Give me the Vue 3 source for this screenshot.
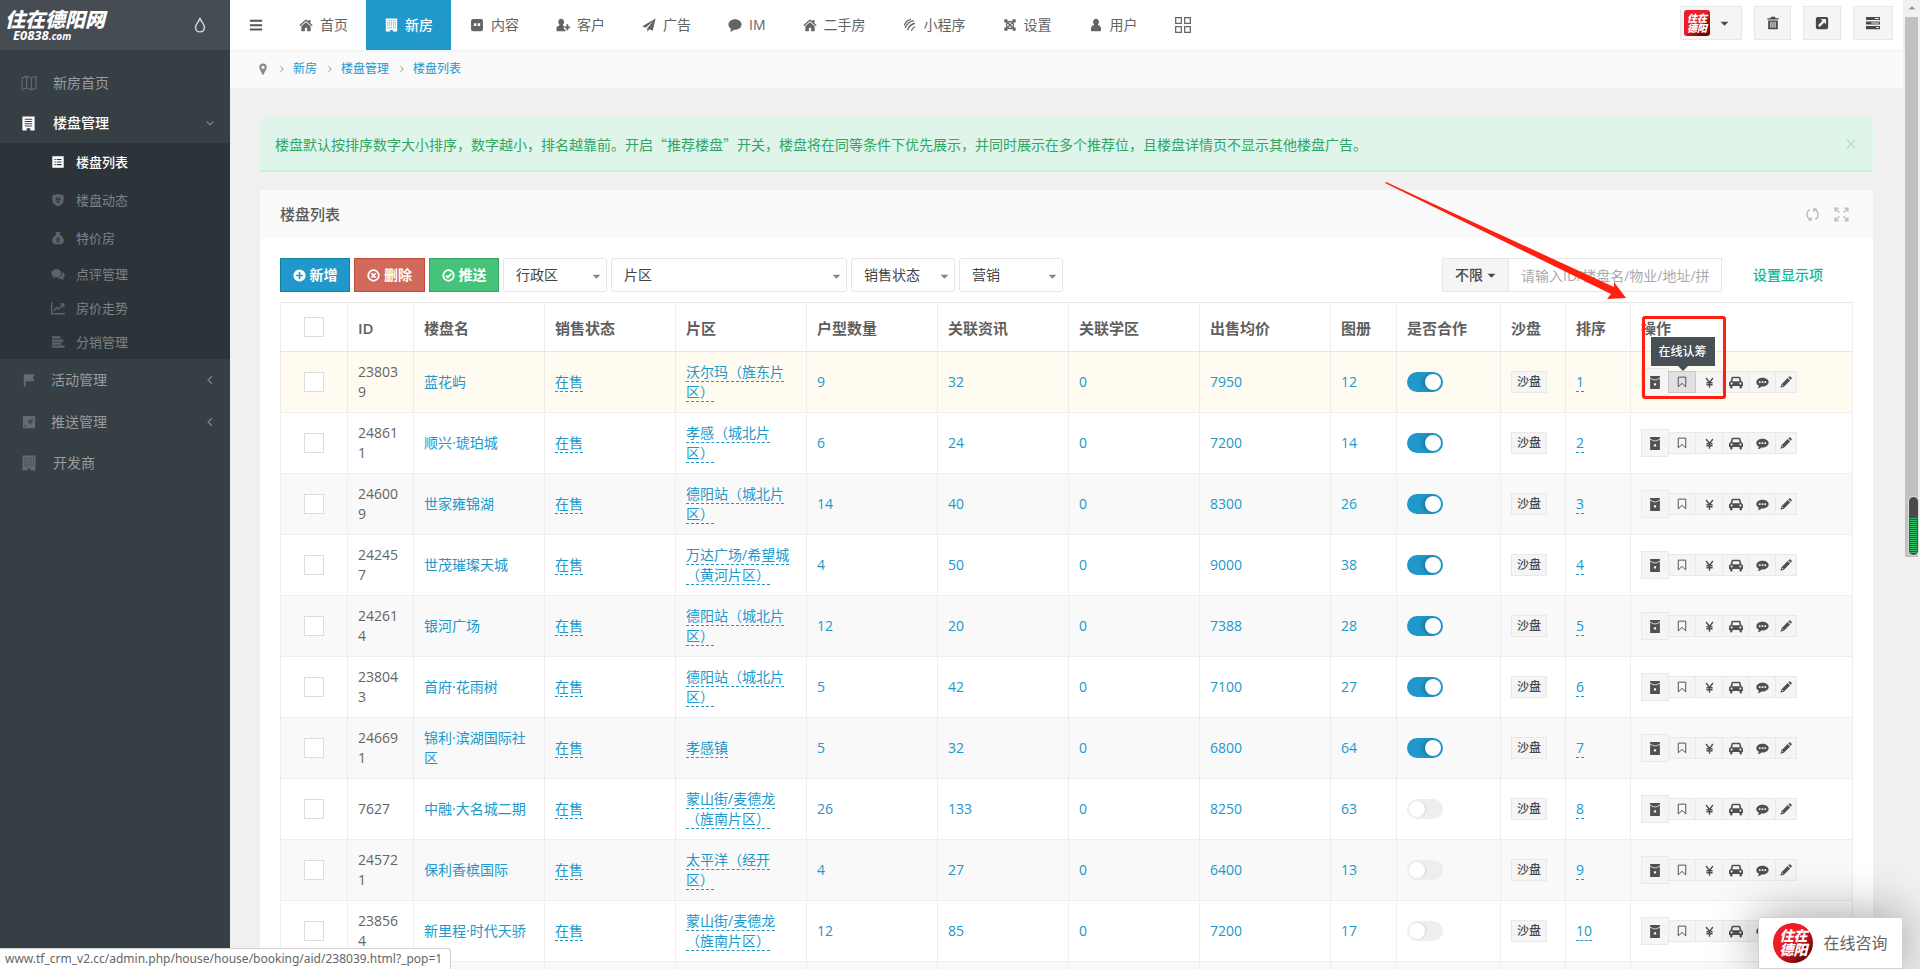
<script setup>
import { h, ref } from 'vue'

const dots = (x0, y0, cols, rows, step, size) => {
  let d = ''
  for (let r = 0; r < rows; r++)
    for (let c = 0; c < cols; c++) d += `M${x0 + c * step} ${y0 + r * step}h${size}v${size}h-${size}z`
  return d
}

const glyphs = {
  menu: { f: 'M1 2h14v2.4H1zM1 7h14v2.4H1zM1 12h14v2.4H1z' },
  home: { f: 'M8 1.4 0.4 8.2l1 1.1L8 3.5l6.6 5.8 1-1.1-2.5-2.3V2.2h-2.2v1.7zM8 4.8 2.7 9.4V15h4V11h2.6v4h4V9.4z' },
  building: { f: 'M1.500 0.500h13v15H9.500v-1.900h-3V15.500H1.500z' + dots(3.4, 2.2, 5, 5, 2.1, 1) },
  tower: { f: 'M1.5 0.5h13v15H10v-2.4H6v2.4H1.5zM4 2.8h8V4H4zM4 5.2h8v1.2H4zM4 7.6h8v1.2H4zM4 10h8v1.2H4z' },
  face: { f: 'M3.400 1h9.200A2.200 2.200 0 0 1 14.800 3.200v9.600a2.200 2.200 0 0 1-2.200 2.200H3.400A2.200 2.200 0 0 1 1.200 12.800V3.200A2.200 2.200 0 0 1 3.400 1zM4.400 6h2.800v3H4.400zM8.800 6h2.800v3H8.800z' },
  userplus: { f: 'M6 1a3.2 3.6 0 0 1 1.8 6.6C8 9 10 9 10.4 10.2H9v3H11V15H0.8C0 10.500 1.200 9.400 4 8.600V7.600A3.200 3.600 0 0 1 6 1zM12 7h2v2.600h2v2h-2V14h-2v-2.400h-2.200v-2H12z' },
  plane: { f: 'M15.600 0.600 0.400 9.400l3.600 1.600L13 3.400 6 11.700V15.600l2.400-2.800 3.800 1.700z' },
  comment: { f: 'M8 1.500c4.200 0 7.500 2.700 7.500 6s-3.300 6-7.500 6l-1.300-.1C5.400 15 3.600 15.600 2.200 15.600c1-1 1.300-2 1.200-3.200C1.600 11.300.500 9.500.500 7.500c0-3.300 3.300-6 7.500-6z' },
  waves: { s: 'M1.500 8.500C2.500 5 5 2.500 9 1.500M2.500 11.500C4 7.500 7.500 3.800 12.500 3M5 14C6.500 10 9.500 7 13.500 6M9.500 14.500C10.300 12.300 11.800 10.800 14 10', w: 1.500 },
  cross: { s: 'M3.200 3.200l9.600 9.600M12.800 3.200l-9.600 9.600M4 5.500C6 3.500 10 3.500 12 5.500M4 10.500C6 12.500 10 12.500 12 10.500M5 4C3.800 6 3.800 10 5 12M11 4C12.200 6 12.200 10 11 12', w: 1.500, f: 'M1.500 1.500h3.600v3.600H1.500zM10.900 1.500h3.600v3.600h-3.600zM1.500 10.900h3.600v3.600H1.500zM10.900 10.900h3.600v3.600h-3.600z' },
  user: { f: 'M8 .8a3.400 3.800 0 0 1 2 6.900c2.600 1 4 2.500 3.800 5.300 0 1.500-.6 2.200-1.800 2.200H4c-1.200 0-1.800-.7-1.800-2.200C2 10.200 3.400 8.700 6 7.700A3.400 3.800 0 0 1 8 .8z' },
  grid: { s: 'M1.500 1.500h5v5h-5zM9.500 1.500h5v5h-5zM1.500 9.500h5v5h-5zM9.500 9.500h5v5h-5z', w: 1.100 },
  drop: { s: 'M8 1.500C6.500 5 3.500 7.500 3.500 10.600a4.500 4.300 0 0 0 9 0C12.500 7.500 9.500 5 8 1.500z', w: 1.400 },
  map: { s: 'M1 3l4.600-1.800 4.800 1.800L15 1.200V13l-4.600 1.800L5.600 13 1 14.800zM5.600 1.200V13M10.400 3v11.800', w: 1.100 },
  down: { s: 'M3.500 6l4.500 4.500L12.500 6', w: 1.700 },
  left: { s: 'M10.500 3L5.500 8l5 5', w: 1.700 },
  right: { s: 'M5.500 3.500L10 8l-4.500 4.500', w: 1.500 },
  list: { f: 'M1.500 1.500h13v13h-13zM4 4.500h1.500v1.300H4zM6.500 4.500H12v1.300H6.500zM4 7.400h1.500v1.300H4zM6.500 7.400H12v1.300H6.500zM4 10.300h1.500v1.300H4zM6.500 10.300H12v1.300H6.500z' },
  shield: { f: 'M8 .8l6.500 2v5.500c0 3.500-2.500 5.500-6.500 7-4-1.500-6.500-3.500-6.500-7V2.800zM5 4.500l1.600 2.500H5v1h2.300v1H5v1h2.300v1.800h1.400V10H11V9H8.700V8H11V7H9.400L11 4.500H9.600L8 7 6.400 4.500z' },
  bag: { f: 'M5 1h6L9.800 4.200c3 1 5 4 5 7 0 2.600-1.500 3.800-4 3.800H5.200c-2.500 0-4-1.200-4-3.800 0-3 2-6 5-7zM7.300 6.800v1.800H5.800v1.100h1.500V11H5.800v1.100h1.500v1h1.400v-1h1.500V11H8.700V9.700h1.500V8.600H8.700V6.800z' },
  comments: { f: 'M6.200 2.500c3.200 0 5.800 2 5.800 4.500s-2.600 4.500-5.800 4.500l-1-.1c-1 .8-2.400 1.100-3.700 1.100.7-.7 1-1.200 1-2C1.200 9.700.4 8.400.4 7c0-2.500 2.600-4.500 5.800-4.500zM13 5.800c1.700.7 2.700 2 2.700 3.500 0 1.300-.7 2.400-1.900 3.200.1.800.4 1.300 1 2-1.500 0-2.900-.4-3.900-1.200-1.700.1-3.100-.2-4.300-1C10.600 12.200 13.600 9.600 13 5.800z' },
  chart: { s: 'M.8 1.500v13h15M3 11.500l3.500-4 2 2L14 4M10.500 3.500h4v4', w: 1.600 },
  bars: { f: 'M1 1.500h10v2.600H1zM1 5h13v2.600H1zM1 8.500h11v2.600H1zM1 12h14.500v2.600H1z' },
  flag: { f: 'M2 1.500h12.500L12.500 5.500l2 4H4.200V15H2z' },
  push: { f: 'M2 1h12a1 1 0 0 1 1 1v12a1 1 0 0 1-1 1H2a1 1 0 0 1-1-1V2a1 1 0 0 1 1-1zM12 4 8.800 7.200V5H7.500v4.300H12V8.200H9.800L12.800 5zM3 11.500v1.500h1.500v-1.500z' },
  pin: { f: 'M8 .8a5 5 0 0 1 5 5c0 3-3 5.500-3.800 9.400H6.800C6 11.300 3 8.800 3 5.800a5 5 0 0 1 5-5zM8 3.600a2.200 2.200 0 1 0 0 4.400 2.200 2.200 0 0 0 0-4.400z' },
  trash: { f: 'M6 .8h4l.8 1.700H14.500v1.600h-13V2.500H5.200zM2.500 5h11v10.200h-11zM5 6.500v7h1.200v-7zM7.400 6.500v7h1.200v-7zM9.800 6.500v7H11v-7z' },
  external: { f: 'M3 1h10a2 2 0 0 1 2 2v10a2 2 0 0 1-2 2H3a2 2 0 0 1-2-2V3a2 2 0 0 1 2-2zM6.500 3.500l2 2-5 5 2 2 5-5 2 2v-6z' },
  tasks: { f: 'M0 1h16v3.600H0zM0 6.200h16v3.600H0zM0 11.400h16V15H0zM10 2.200v1.200h4.800V2.200zM6 7.400v1.200h8.800V7.400zM11.500 12.600v1.200h3.300v-1.200z' },
  close: { s: 'M2.500 2.500l11 11M13.500 2.500l-11 11', w: 2.600 },
  refresh: { s: 'M5 2.800C1 5 1 11 5.600 13.500M3.500 14h3v-3M11 13.200C15 11 15 5 10.400 2.500M12.500 2h-3v3', w: 1.400 },
  expand: { s: 'M1.200 5V1.200H5M1.500 1.500l4.300 4.300M11 1.200h3.800V5M14.500 1.500l-4.300 4.300M1.200 11v3.800H5M1.500 14.500l4.300-4.300M14.800 11v3.800H11M14.500 14.500l-4.300-4.300', w: 1.500 },
  plus: { f: 'M8 .5a7.500 7.500 0 1 1 0 15 7.500 7.500 0 0 1 0-15zM7 3.800V7H3.800v2H7v3.200h2V9h3.200V7H9V3.800z' },
  del: { s: 'M8 1.500a6.500 6.500 0 1 1 0 13 6.500 6.500 0 0 1 0-13zM5.500 5.500l5 5M10.500 5.500l-5 5', w: 2.200 },
  check: { s: 'M8 1.500a6.500 6.500 0 1 1 0 13 6.500 6.500 0 0 1 0-13zM4.800 8l2.400 2.400L11.400 6', w: 2.200 },
  caret: { f: 'M1 5h14L8 12z' },
  archive: { f: 'M2 0h12v16H2zM2 2.200v1L6.200 5.200h3.600L14 3.200v-1L9.600 4.200H6.400zM6.600 9v2.600h2.800V9z' },
  bookmark: { s: 'M3 1.500h10v13l-5-4.700-5 4.700z', w: 1.300 },
  yen: { s: 'M3 1.500L8 8l5-6.500M8 8v7.500M3.500 8.300h9M3.500 11.300h9', w: 2 },
  car: { f: 'M4.200 2h7.600c.7 0 1.200.4 1.400 1.200L14.200 7c1.100.2 1.800 1 1.800 2.200V12.500h-1.200V14a1.400 1.400 0 0 1-2.800 0v-1.500H4V14a1.400 1.400 0 0 1-2.800 0v-1.500H0V9.200C0 8 .7 7.200 1.800 7l1-3.800C3 2.400 3.500 2 4.200 2zM4.500 3.800L3.800 7h8.400l-.7-3.200zM3 8.500a1.200 1.200 0 1 0 0 2.400 1.200 1.200 0 0 0 0-2.400zM13 8.500a1.200 1.200 0 1 0 0 2.400 1.200 1.200 0 0 0 0-2.400z' },
  chat: { f: 'M8 2c4.200 0 7.600 2.300 7.600 5.500S12.200 13 8 13l-1.300-.1C5.400 14.300 3.600 15 2.200 15c.8-.8 1.200-1.700 1.200-2.900C1.500 11.200.4 9.500.4 7.500.4 4.300 3.800 2 8 2zM3.600 6.500v2h2v-2zM7 6.500v2h2v-2zM10.400 6.500v2h2v-2z' },
  pencil: { f: 'M12.400.6a1 1 0 0 1 1.400 0l1.700 1.700a1 1 0 0 1 0 1.400l-1.300 1.300-3.200-3.200zM10.200 2.600l3.300 3.300-8.300 8.300-4.700 1.500 1.500-4.800zM3 11.500l-.8 2.300 2.200-.8z' }
}

const Icon = ({ name }) => {
  const g = glyphs[name]
  return h('svg', { class: 'icon', viewBox: '0 0 16 16', 'aria-hidden': 'true' }, [
    g.f && h('path', { d: g.f, fill: 'currentColor', 'fill-rule': 'evenodd' }),
    g.s && h('path', { d: g.s, fill: 'none', stroke: 'currentColor', 'stroke-width': g.w })
  ])
}
Icon.props = ['name']

const nav = [
  ['home', '首页'], ['building', '新房'], ['face', '内容'], ['userplus', '客户'], ['plane', '广告'],
  ['comment', 'IM'], ['home', '二手房'], ['waves', '小程序'], ['cross', '设置'], ['user', '用户']
]
const submenu = [
  ['list', '楼盘列表'], ['shield', '楼盘动态'], ['bag', '特价房'],
  ['comments', '点评管理'], ['chart', '房价走势'], ['bars', '分销管理']
]
const crumbs = ['新房', '楼盘管理', '楼盘列表']
const filters = [['行政区', ''], ['片区', 'wide'], ['销售状态', ''], ['营销', '']]
const heads = ['ID', '楼盘名', '销售状态', '片区', '户型数量', '关联资讯', '关联学区', '出售均价', '图册', '是否合作', '沙盘', '排序', '操作']
const actions = [['bookmark', '在线认筹'], ['yen', '价格'], ['car', '看房'], ['chat', '点评'], ['pencil', '编辑']]

const rows = ref([
  ['238039', '蓝花屿', '沃尔玛（旌东片区）', 9, 32, 7950, 12, true],
  ['248611', '顺兴·琥珀城', '孝感（城北片区）', 6, 24, 7200, 14, true],
  ['246009', '世家雍锦湖', '德阳站（城北片区）', 14, 40, 8300, 26, true],
  ['242457', '世茂璀璨天城', '万达广场/希望城（黄河片区）', 4, 50, 9000, 38, true],
  ['242614', '银河广场', '德阳站（城北片区）', 12, 20, 7388, 28, true],
  ['238043', '首府·花雨树', '德阳站（城北片区）', 5, 42, 7100, 27, true],
  ['246691', '锦利·滨湖国际社区', '孝感镇', 5, 32, 6800, 64, true],
  ['7627', '中融·大名城二期', '蒙山街/麦德龙（旌南片区）', 26, 133, 8250, 63, false],
  ['245721', '保利香槟国际', '太平洋（经开区）', 4, 27, 6400, 13, false],
  ['238564', '新里程·时代天骄', '蒙山街/麦德龙（旌南片区）', 12, 85, 7200, 17, false]
].map(([id, name, area, types, news, price, album, on]) => ({ id, name, area, types, news, price, album, on })))
</script>

<template>
  <div class="app">
    <aside class="side">
      <div class="brand">
        <a href="#" class="logo"><strong>住在德阳网</strong><span>E0838<small>.com</small></span></a>
        <Icon name="drop" class="drop" />
      </div>
      <nav class="menu">
        <a href="#"><Icon name="map" />新房首页</a>
        <a href="#" class="open"><Icon name="tower" />楼盘管理<Icon name="down" class="fold" /></a>
        <div class="submenu">
          <a v-for="(s, i) in submenu" :key="s[1]" href="#" :class="{ current: i === 0, tight: i > 2 }"><Icon :name="s[0]" />{{ s[1] }}</a>
        </div>
        <a href="#" class="group"><Icon name="flag" />活动管理<Icon name="left" class="fold" /></a>
        <a href="#" class="group"><Icon name="push" />推送管理<Icon name="left" class="fold" /></a>
        <a href="#"><Icon name="building" />开发商</a>
      </nav>
    </aside>

    <main class="main">
      <header class="top">
        <button class="burger" aria-label="菜单"><Icon name="menu" /></button>
        <nav class="tabs">
          <a v-for="(n, i) in nav" :key="n[1]" href="#" :class="{ on: i === 1 }"><Icon :name="n[0]" />{{ n[1] }}</a>
          <a href="#" aria-label="更多"><Icon name="grid" /></a>
        </nav>
        <div class="tools">
          <button class="account" aria-label="账户"><span class="stamp">住在<br>德阳</span><Icon name="caret" class="caret" /></button>
          <button class="t1" aria-label="清理"><Icon name="trash" /></button>
          <button class="t2" aria-label="打开"><Icon name="external" /></button>
          <button class="t3" aria-label="任务"><Icon name="tasks" /></button>
        </div>
      </header>

      <nav class="crumbs">
        <Icon name="pin" class="pin" />
        <template v-for="c in crumbs" :key="c"><Icon name="right" class="sep" /><a href="#">{{ c }}</a></template>
      </nav>

      <div class="content">
        <div class="alert">
          <p>楼盘默认按排序数字大小排序，数字越小，排名越靠前。开启“推荐楼盘”开关，楼盘将在同等条件下优先展示，并同时展示在多个推荐位，且楼盘详情页不显示其他楼盘广告。</p>
          <button aria-label="关闭"><Icon name="close" /></button>
        </div>

        <section class="panel">
          <div class="panel-head">
            <h1>楼盘列表</h1>
            <button aria-label="刷新"><Icon name="refresh" /></button>
            <button aria-label="全屏"><Icon name="expand" /></button>
          </div>
          <div class="panel-body">
            <div class="bar">
              <button class="btn blue"><Icon name="plus" />新增</button>
              <button class="btn red"><Icon name="del" />删除</button>
              <button class="btn green"><Icon name="check" />推送</button>
              <span v-for="f in filters" :key="f[0]" class="pick" :class="f[1]">
                <select :aria-label="f[0]"><option>{{ f[0] }}</option></select><Icon name="caret" class="caret" />
              </span>
              <div class="search">
                <button>不限<Icon name="caret" class="caret" /></button>
                <input type="text" aria-label="搜索" placeholder="请输入ID/楼盘名/物业/地址/拼音">
              </div>
              <a href="#" class="setup">设置显示项</a>
            </div>

            <table>
              <colgroup>
                <col class="c-check"><col class="c-s"><col v-for="n in 7" :key="n" class="c-m"><col class="c-s"><col class="c-sw"><col class="c-t"><col class="c-t"><col>
              </colgroup>
              <thead>
                <tr>
                  <th class="tick"><input type="checkbox" aria-label="全选"></th>
                  <th v-for="t in heads" :key="t">{{ t }}</th>
                </tr>
              </thead>
              <tbody>
                <tr v-for="(r, i) in rows" :key="r.id">
                  <td class="tick"><input type="checkbox" :aria-label="'选择 ' + r.name"></td>
                  <td class="id">{{ r.id }}</td>
                  <td><a href="#">{{ r.name }}</a></td>
                  <td><a href="#" class="edit">在售</a></td>
                  <td><a href="#" class="edit">{{ r.area }}</a></td>
                  <td><a href="#">{{ r.types }}</a></td>
                  <td><a href="#">{{ r.news }}</a></td>
                  <td><a href="#">0</a></td>
                  <td><a href="#">{{ r.price }}</a></td>
                  <td><a href="#">{{ r.album }}</a></td>
                  <td><input v-model="r.on" type="checkbox" role="switch" class="switch" aria-label="是否合作"></td>
                  <td><button class="mini">沙盘</button></td>
                  <td><a href="#" class="edit">{{ i + 1 }}</a></td>
                  <td>
                    <div class="acts">
                      <button class="big" aria-label="归档"><Icon name="archive" /></button>
                      <span v-for="(a, k) in actions" :key="a[0]" class="act">
                        <button :aria-label="a[1]" :class="[a[0], { hover: i === 0 && k === 0 }]"><Icon :name="a[0]" /></button>
                        <span v-if="i === 0 && k === 0" class="tip" role="tooltip">{{ a[1] }}</span>
                      </span>
                      <template v-if="i === 0">
                        <div class="mark"></div>
                        <svg class="arrow" viewBox="0 0 242 118" aria-hidden="true"><path d="M1 0L229 105v-5l12 16-19 1 4-5L0 1z" fill="#ff2011" /></svg>
                      </template>
                    </div>
                  </td>
                </tr>
                <tr><td v-for="n in 14" :key="n"></td></tr>
              </tbody>
            </table>
          </div>
        </section>
      </div>
    </main>

    <div class="scroll">
      <Icon name="caret" class="up" />
      <div class="thumb"><div class="meter"></div></div>
      <Icon name="caret" class="dn" />
    </div>

    <button class="chat-box"><span class="stamp round">住在<br>德阳</span>在线咨询</button>
    <div class="status">www.tf_crm_v2.cc/admin.php/house/house/booking/aid/238039.html?_pop=1</div>
  </div>
</template>

<style>
body { margin: 0; }
</style>

<style scoped>
* { box-sizing: border-box; }
.app { display: grid; grid-template-columns: 230px minmax(0, 1fr) 17px; height: 100vh; overflow: hidden; position: relative; background: #f0f0f0; color: #646464; font: 14px/20px "Open Sans", "Noto Sans CJK SC", sans-serif; text-spacing-trim: space-all; }
button, input, select { font: inherit; color: inherit; margin: 0; }
button { display: inline-flex; align-items: center; justify-content: center; padding: 0; border: 0; background: none; cursor: pointer; }
a { color: #2098cc; text-decoration: none; }
.icon { width: 14px; height: 14px; flex: none; display: block; }

.side { background: #353f44; }
.brand { height: 50px; background: #464d52; position: relative; display: flex; align-items: center; justify-content: space-between; padding: 0 22px 0 5px; }
.logo { color: #fff; font-style: italic; display: flex; flex-direction: column; }
.logo strong { font-size: 20px; line-height: 20px; font-weight: 900; }
.logo span { font-size: 13px; line-height: 10px; font-weight: 700; padding-left: 8px; }
.logo small { font-size: 10px; }
.drop { width: 16px; height: 16px; color: #d8dadb; }
.menu { padding-top: 13px; }
.menu a { display: flex; align-items: center; height: 40px; padding: 0 14px 0 21px; color: #989c9e; }
.menu .icon { width: 16px; height: 16px; margin-right: 16px; color: #646c70; }
.menu .group { height: 42px; padding-left: 20px; }
.menu .group .icon { width: 14px; height: 14px; margin: 0 15px 0 2px; }
.menu .open { color: #fff; font-weight: 500; }
.menu .open .icon { width: 15px; height: 15px; margin: 0 17px 0 0; color: #fff; }
.menu .icon.fold, .menu .group .icon.fold { width: 12px; height: 12px; margin: 0 0 0 auto; color: #7d8487; }
.submenu { background: #2c343a; }
.menu .submenu a { height: 38px; padding-left: 51px; font-size: 13px; color: #7c8285; }
.menu .submenu a.tight { height: 34px; }
.menu .submenu .icon { width: 14px; height: 14px; margin-right: 11px; color: #5d6468; }
.menu .submenu .current { color: #fff; font-weight: 500; }
.menu .submenu .current .icon { color: #fff; }

.top { height: 50px; background: #fff; display: flex; align-items: center; padding: 0 10px 0 19px; position: relative; box-shadow: 0 1px 3px rgba(0, 0, 0, 0.05); }
.burger { width: 31px; height: 50px; justify-content: flex-start; color: #555; }
.tabs { display: flex; }
.tabs a { display: flex; align-items: center; gap: 6px; height: 50px; padding: 0 18px; color: #646464; }
.tabs .icon { width: 16px; height: 14px; }
.tabs .on { background: #2098cc; color: #fff; font-weight: 500; }
.tabs .on .icon { width: 15px; }
.tabs a:last-child .icon { width: 18px; height: 18px; }
.tools { margin-left: auto; display: flex; gap: 12px; margin-bottom: 4px; }
.tools button { height: 34px; border: 1px solid #e8e8e8; background: #f5f5f5; color: #484848; }
.tools .account { width: 62px; gap: 10px; justify-content: flex-start; padding-left: 3px; }
.tools .t1 { width: 37px; }
.tools .t2 { width: 38px; }
.tools .t3 { width: 40px; }
.icon.caret { width: 9px; height: 9px; }
.stamp { display: flex; align-items: center; justify-content: center; width: 26px; height: 26px; border-radius: 3px; background: linear-gradient(135deg, #ee1c25 45%, #74060c 80%); color: #fff; font-size: 10px; line-height: 10px; font-weight: 900; font-style: italic; }

.crumbs { height: 38px; background: #fafafa; display: flex; align-items: center; padding-left: 27px; font-size: 12px; }
.crumbs .pin { width: 12px; height: 12px; color: #888; }
.crumbs .sep { width: 10px; height: 10px; margin: 0 6px 0 8px; color: #888; }

.content { padding: 30px; }
.alert { display: flex; align-items: center; height: 54px; padding: 0 16px 0 15px; background: #dff5e9; border-bottom: 2px solid #ceeedd; border-radius: 2px; color: #32a566; margin-bottom: 18px; }
.alert p { margin: 0 auto 0 0; font-family: "Noto Sans CJK SC", sans-serif; }
.alert button { color: #bde4cd; }
.alert .icon { width: 12px; height: 12px; }

.panel { background: #fff; }
.panel-head { height: 48px; background: #fafafa; display: flex; align-items: center; gap: 14px; padding: 0 24px 0 20px; color: #bbb; }
h1 { margin: 0 auto 0 0; font-size: 15px; line-height: 20px; font-weight: 500; color: #5a5a5a; }
.panel-head .icon { width: 15px; height: 15px; }
.panel-body { padding: 20px 20px 30px; }
.bar { display: flex; align-items: center; gap: 4px; margin-bottom: 10px; }
.btn { width: 70px; height: 34px; gap: 4px; color: #fff; font-weight: 700; border: 1px solid; }
.btn .icon { width: 13px; height: 13px; }
.blue { background: #2098cc; border-color: #11829b; }
.red { width: 71px; background: #d16a5b; border-color: #c24a39; }
.green { background: #46c37b; border-color: #34a263; }
.pick { position: relative; width: 104px; }
.pick.wide { width: 236px; }
.pick select { appearance: none; width: 100%; height: 34px; padding: 0 12px; border: 1px solid #e6e6e6; border-radius: 3px; background: #fff; color: #444; }
.pick .caret { position: absolute; right: 6px; top: 14px; color: #888; }
.search { display: flex; margin-left: auto; }
.search button { width: 67px; height: 34px; gap: 4px; border: 1px solid #e6e6e6; background: #f5f5f5; color: #484848; font-weight: 500; }
.search input { width: 214px; height: 34px; padding: 0 12px; margin-left: -1px; border: 1px solid #e6e6e6; background: #fff; outline: 0; }
.search input::placeholder { color: #aaa; }
.setup { margin: 0 30px 0 27px; color: #14b595; font-weight: 500; }

table { width: 100%; table-layout: fixed; border-collapse: collapse; border: 1px solid #e6e6e6; }
.c-check { width: 67px; }
.c-s { width: 66px; }
.c-t { width: 65px; }
.c-m { width: 131px; }
.c-sw { width: 104px; }
th, td { border: 1px solid #eee; padding: 10px; text-align: left; vertical-align: middle; }
th { padding: 15px 10px 13px; font-size: 15px; font-weight: 600; color: #5f5f5f; line-height: 20px; border-color: #e6e6e6 #eee; }
td { height: 61px; }
.id { word-break: break-all; }
tbody tr:nth-child(odd) { background: #f9f9f9; }
tbody tr:first-child { background: #fffbf0; }
.edit { border-bottom: 1px dashed #2098cc; }
.tick { text-align: center; padding: 0; }
.tick input { appearance: none; display: block; width: 20px; height: 20px; margin: 0 auto; border: 1px solid #ddd; background: #fff; }
.switch { appearance: none; display: block; width: 36px; height: 20px; border-radius: 10px; background: #eee; position: relative; }
.switch::before { content: ""; position: absolute; left: 2px; top: 2px; width: 16px; height: 16px; border-radius: 50%; background: #fff; box-shadow: 1px 0 2px rgba(0, 0, 0, 0.1); }
.switch:checked { background: #2098cc; }
.switch:checked::before { left: 18px; box-shadow: -2px 0 4px rgba(0, 0, 0, 0.25); }
.mini { display: flex; width: 36px; height: 22px; border: 1px solid #e9e9e9; background: #f5f5f5; color: #484848; font-size: 12px; font-weight: 500; }
.acts { display: flex; align-items: center; position: relative; }
.acts button { display: flex; width: 28px; height: 22px; margin-left: -1px; border: 1px solid #e9e9e9; background: #f5f5f5; color: #505050; }
.acts .big { height: 28px; margin: 0; }
.acts .big .icon { width: 14px; height: 13px; }
.acts .icon { width: 12px; height: 12px; }
.acts .car { width: 27px; }
.acts .car .icon { width: 14px; height: 14px; }
.acts .yen .icon { width: 11px; height: 11px; }
.acts .chat .icon { width: 13px; height: 13px; }
.acts .pencil { width: 22px; }
.acts .hover { background: #e1e1e1; border-color: #c8c8c8; position: relative; z-index: 1; }
.act { position: relative; }
.tip { position: absolute; z-index: 2; left: 50%; bottom: 27px; width: 64px; margin-left: -32px; height: 29px; display: flex; align-items: center; justify-content: center; background: #475055; color: #fff; font-size: 12px; font-weight: 500; white-space: nowrap; }
.tip::after { content: ""; position: absolute; left: 27px; top: 29px; border: 5px solid transparent; border-top-color: #475055; border-bottom: 0; }
.mark { position: absolute; z-index: 3; left: 1px; top: -52px; width: 84px; height: 83px; border: 3px solid #ff2011; border-radius: 3px; pointer-events: none; }
.arrow { position: absolute; z-index: 3; left: -256px; top: -186px; width: 242px; height: 118px; pointer-events: none; }

.scroll { background: #f1f1f1; display: flex; flex-direction: column; align-items: center; justify-content: space-between; padding: 4px 0; }
.scroll .icon { width: 8px; height: 8px; color: #999; }
.scroll .up { transform: rotate(180deg); }
.scroll .dn { color: #505050; }
.thumb { width: 13px; height: 540px; margin: 5px 0 auto; background: #c1c1c1; display: flex; align-items: flex-end; justify-content: flex-end; }
.meter { width: 9px; height: 58px; margin-bottom: 2px; border: 1px solid #505050; border-radius: 4px; outline: 1px solid #ddd; background: repeating-linear-gradient(#2fbd68 0 1px, #4a4a4a 1px 2px) 0 20px / 100% 35px no-repeat #4a4a4a; }

.chat-box { position: absolute; right: 17px; bottom: 0; width: 145px; height: 52px; gap: 10px; border: 1px solid #d0d0d0; border-radius: 2px; background: #fff; box-shadow: 0 0 50px rgba(0, 0, 0, 0.4); font-size: 16px; color: #666; z-index: 5; }
.stamp.round { width: 40px; height: 40px; border-radius: 50%; font-size: 14px; line-height: 14px; }
.status { position: absolute; left: 0; bottom: 0; z-index: 5; height: 21px; padding: 0 8px 0 5px; border: 1px solid #d0d0d0; border-left: 0; border-bottom: 0; border-radius: 0 4px 0 0; background: #fff; font-family: "Noto Sans", sans-serif; font-size: 12px; line-height: 20px; color: #666; }
</style>
